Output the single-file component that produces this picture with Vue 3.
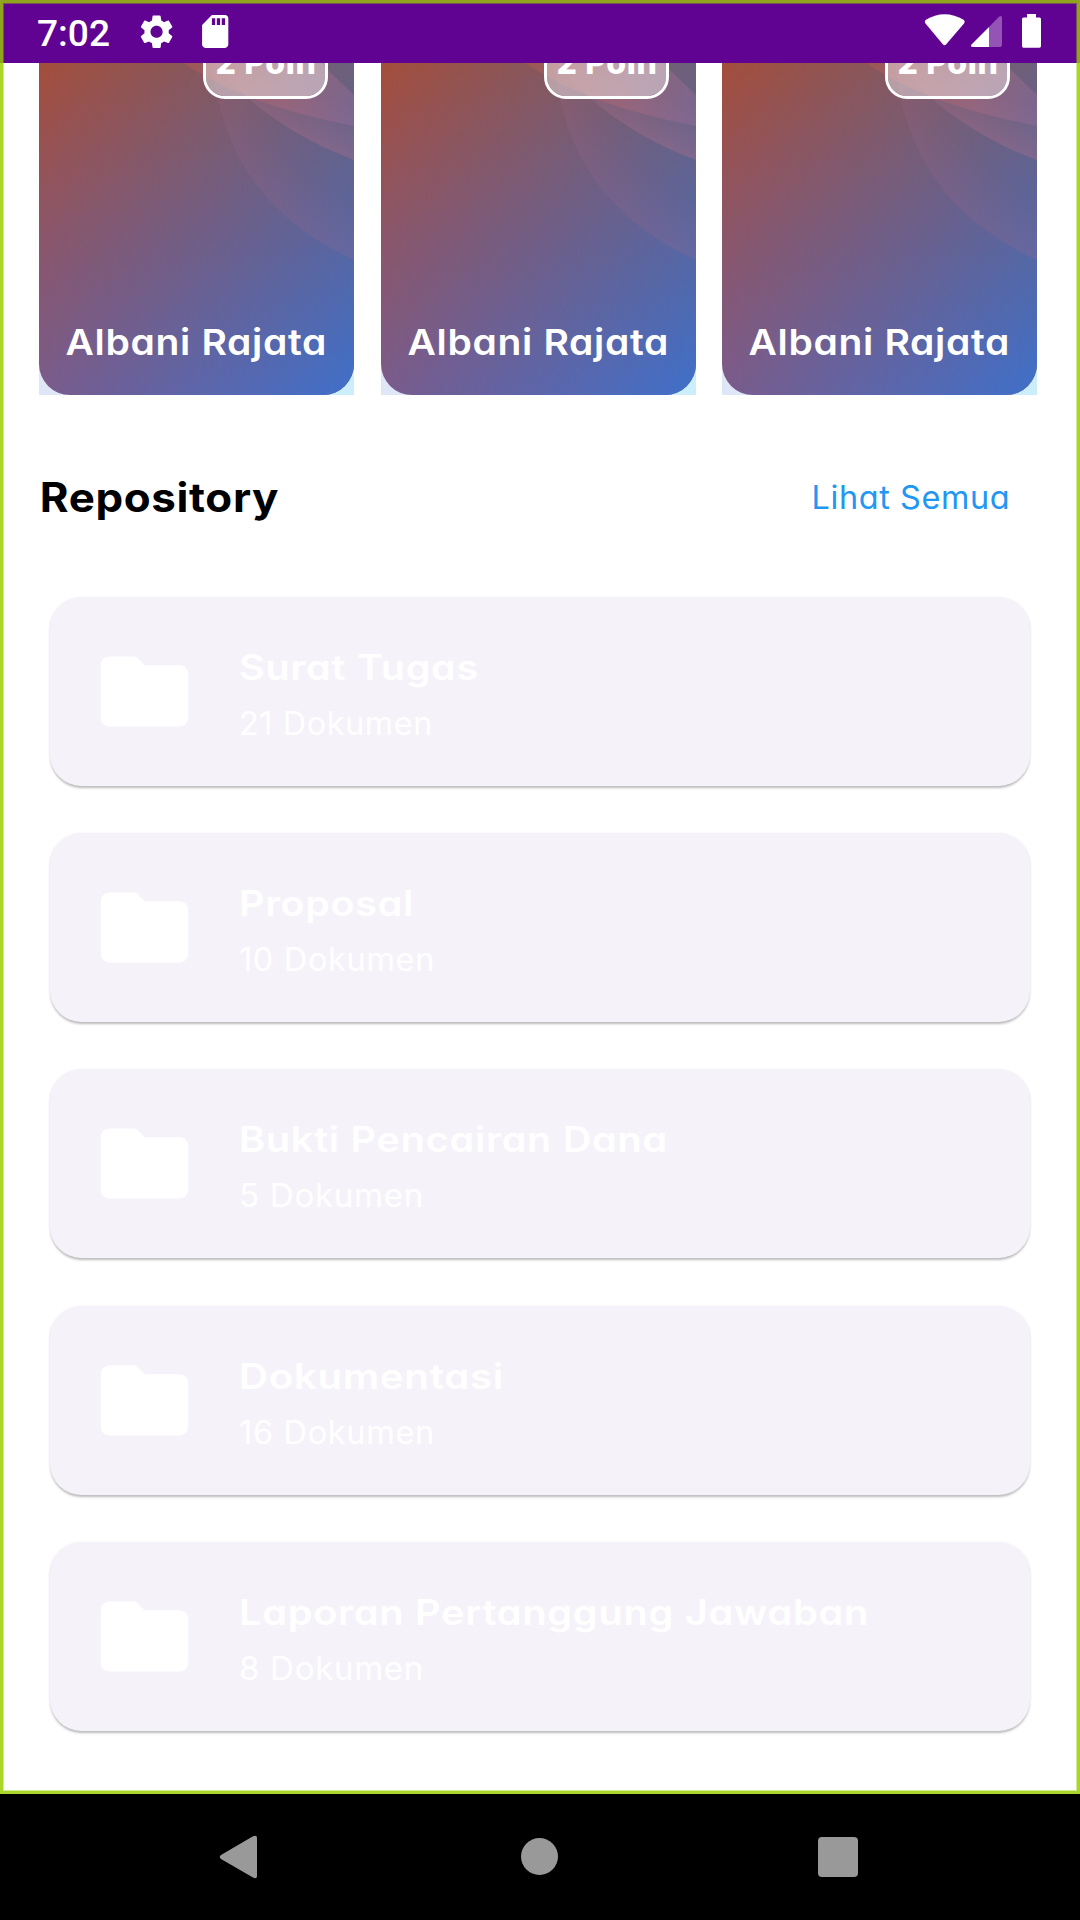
<script setup>
const people = [1, 2, 3]
const folders = [
  { title: 'Surat Tugas', tw: 240, sub: '21 Dokumen', sw: 194 },
  { title: 'Proposal', tw: 175, sub: '10 Dokumen', sw: 196 },
  { title: 'Bukti Pencairan Dana', tw: 429, sub: '5 Dokumen', sw: 185 },
  { title: 'Dokumentasi', tw: 265, sub: '16 Dokumen', sw: 196 },
  { title: 'Laporan Pertanggung Jawaban', tw: 630, sub: '8 Dokumen', sw: 185 },
]
</script>

<template>
  <div class="screen">
    <header class="status">
      <svg width="300" height="63" viewBox="0 0 300 63">
        <text x="37" y="45.700" textLength="73" lengthAdjust="spacingAndGlyphs" class="clock">7:02</text>
        <g transform="translate(136.300 11.500) scale(1.690)">
          <path fill="#fff" d="M19.14 12.94c.04-.3.06-.61.06-.94 0-.32-.02-.64-.07-.94l2.03-1.58c.18-.14.23-.41.12-.61l-1.92-3.32c-.12-.22-.37-.29-.59-.22l-2.39.96c-.5-.38-1.03-.7-1.62-.94l-.36-2.54c-.04-.24-.24-.41-.48-.41h-3.84c-.24 0-.43.17-.47.41l-.36 2.54c-.59.24-1.13.57-1.62.94l-2.39-.96c-.22-.08-.47 0-.59.22L2.74 8.87c-.12.21-.08.47.12.61l2.03 1.58c-.05.3-.09.63-.09.94s.02.64.07.94l-2.03 1.58c-.18.14-.23.41-.12.61l1.92 3.32c.12.22.37.29.59.22l2.39-.96c.5.38 1.03.7 1.62.94l.36 2.54c.05.24.24.41.48.41h3.84c.24 0 .44-.17.47-.41l.36-2.54c.59-.24 1.13-.56 1.62-.94l2.39.96c.22.08.47 0 .59-.22l1.92-3.32c.12-.22.07-.47-.12-.61l-2.01-1.58zM12 15.6c-1.98 0-3.6-1.62-3.6-3.6s1.62-3.6 3.6-3.6 3.6 1.62 3.6 3.6-1.62 3.6-3.6 3.6z" />
        </g>
        <g transform="translate(195.500 11.800) scale(1.640)">
          <path fill="#fff" d="M18 2h-8L4.020 8 4 20c0 1.100.9 2 2 2h12c1.100 0 2-.9 2-2V4c0-1.100-.9-2-2-2zm-6 6h-2V4h2v4zm3 0h-2V4h2v4zm3 0h-2V4h2v4z" />
        </g>
      </svg>
      <svg width="160" height="63" viewBox="920 0 160 63">
        <path fill="#fff" d="M925.500 20Q944.500 8.500 964 20Q965.500 21.500 964 23.500L946 44.500Q944.500 46 943 44.500L925.500 23.500Q924 21.500 925.500 20Z" />
        <path fill="#fff" fill-opacity=".32" d="M989 27L999 16.800Q1002 14.800 1002 18V45Q1002 47 1000 47H989Z" />
        <path fill="#fff" d="M989 27V47H973Q970 47 971.500 44.500Z" />
        <path fill="#fff" d="M1027 14H1036V17.500H1039.500Q1041 17.500 1041 19V46Q1041 47.700 1039.500 47.700H1023.500Q1022 47.700 1022 46V19Q1022 17.500 1023.500 17.500H1027Z" />
      </svg>
    </header>

    <main class="content">
      <section class="people">
        <article v-for="p in people" :key="p" class="person">
          <div class="cover">
            <svg class="rings" width="315" height="332" viewBox="0 0 315 332">
              <defs>
                <linearGradient :id="'a' + p" gradientUnits="userSpaceOnUse" x1="150" y1="0" x2="315" y2="50">
                  <stop offset="0" stop-color="#b85a50" stop-opacity=".42" />
                  <stop offset=".6" stop-color="#b06a7c" stop-opacity=".45" />
                  <stop offset="1" stop-color="#a070a0" stop-opacity=".35" />
                </linearGradient>
                <linearGradient :id="'b' + p" gradientUnits="userSpaceOnUse" x1="244" y1="68" x2="264" y2="22">
                  <stop offset="0" stop-color="#a86e8c" stop-opacity=".42" />
                  <stop offset="1" stop-color="#a86e8c" stop-opacity="0" />
                </linearGradient>
                <radialGradient :id="'c' + p" gradientUnits="userSpaceOnUse" cx="400" cy="-28" r="240">
                  <stop offset=".76" stop-color="#a0688c" stop-opacity="0" />
                  <stop offset="1" stop-color="#a0688c" stop-opacity=".22" />
                </radialGradient>
              </defs>
              <path :fill="`url(#c${p})`" d="M173 0C182 80 215 150 315 197V0Z" />
              <path :fill="`url(#b${p})`" d="M176 0C205 36 248 72 315 97V0Z" />
              <path :fill="`url(#a${p})`" d="M144 0C190 30 240 48 315 63V32Q298 16 282 0Z" />
            </svg>
            <div class="badge">
              <svg width="120" height="60" viewBox="0 0 120 60">
                <text x="9.500" y="33.200" textLength="101" lengthAdjust="spacingAndGlyphs" class="points">2 Poin</text>
              </svg>
            </div>
            <svg class="name" width="315" height="60" viewBox="0 0 315 60">
              <text x="26.500" y="39.700" textLength="261.500" lengthAdjust="spacingAndGlyphs" class="name-text">Albani Rajata</text>
            </svg>
          </div>
        </article>
      </section>

      <section class="heading">
        <svg width="260" height="60" viewBox="0 0 260 60">
          <text x="-.3" y="41.700" textLength="239.500" lengthAdjust="spacingAndGlyphs" class="h">Repository</text>
        </svg>
        <svg width="200" height="60" viewBox="0 0 200 60">
          <text x=".6" y="39.200" textLength="198.500" lengthAdjust="spacingAndGlyphs" class="link">Lihat Semua</text>
        </svg>
      </section>

      <section class="list">
        <article v-for="f in folders" :key="f.title" class="folder">
          <svg width="105" height="105" viewBox="0 0 24 24">
            <path fill="#fff" d="M10 4H4c-1.100 0-2 .9-2 2v12c0 1.100.9 2 2 2h16c1.100 0 2-.9 2-2V8c0-1.100-.9-2-2-2h-8l-2-2z" />
          </svg>
          <svg width="700" height="189" viewBox="0 0 700 189">
            <text x="-1" y="82.700" :textLength="f.tw" lengthAdjust="spacingAndGlyphs" class="title">{{ f.title }}</text>
            <text x="-1" y="137.500" :textLength="f.sw" lengthAdjust="spacingAndGlyphs" class="sub">{{ f.sub }}</text>
          </svg>
        </article>
      </section>
    </main>

    <nav class="nav">
      <svg width="1080" height="126" viewBox="0 1794 1080 126">
        <g fill="#999">
          <path d="M221 1855L253 1836.300Q257 1834.500 257 1838V1876Q257 1879.500 253 1877.500L221 1859Q218.500 1857 221 1855Z" />
          <circle cx="539.500" cy="1856.500" r="18.500" />
          <rect x="818" y="1837" width="40" height="40" rx="4" />
        </g>
      </svg>
    </nav>
    <div class="frame"></div>
    <div class="frame-shade"></div>
  </div>
</template>

<style>
body { margin: 0; background: #000; }
</style>

<style scoped>
.screen {
  position: relative;
  width: 1080px;
  height: 1920px;
  display: flex;
  flex-direction: column;
  background: #fff;
  overflow: hidden;
  font-family: Inter, "Noto Sans", sans-serif;
  font-feature-settings: "cv11" 1;
}
svg { display: block; flex: none; }
text { letter-spacing: .6px; }
.status {
  flex: none;
  height: 63px;
  display: flex;
  justify-content: space-between;
  background: #610392;
}
.clock { font: 500 37.500px Roboto, sans-serif; letter-spacing: 0; fill: #fff; }
.content { height: 1731px; flex: none; overflow: hidden; }
.people {
  display: flex;
  gap: 26.250px;
  padding-left: 39.370px;
}
.person {
  width: 315px;
  height: 332px;
  flex: none;
  background: linear-gradient(90deg, #dfe6f8 10%, #cceefa 90%);
}
.cover {
  position: relative;
  height: 331.500px;
  border-radius: 0 0 31px 31px;
  overflow: hidden;
  background: linear-gradient(180deg, #a44e3c 0%, #8d5668 50%, #7a5c8c 100%);
}
.cover::before {
  content: "";
  position: absolute;
  inset: 0;
  background: linear-gradient(180deg, #6c607c 0%, #5866a0 50%, #3f70ca 100%);
  -webkit-mask-image: linear-gradient(90deg, transparent, #000);
  mask-image: linear-gradient(90deg, transparent, #000);
}
.rings { position: relative; }
.badge {
  position: absolute;
  top: -25px;
  left: 163.500px;
  width: 119px;
  height: 55px;
  border: 3px solid #fff;
  border-radius: 22px;
  background: rgba(255, 255, 255, .42);
  background-clip: padding-box;
}
.points { font-size: 32px; font-weight: 800; fill: #fff; }
.name { position: absolute; left: 0; top: 252px; }
.name-text { font-size: 35.500px; font-weight: 600; fill: #fff; }
.heading {
  display: flex;
  justify-content: space-between;
  padding: 75px 69px 0 40px;
  height: 126.750px;
}
.h { font-size: 40.500px; font-weight: 700; fill: #000; }
.link { font-size: 32px; font-weight: 400; fill: #2196f3; }
.list {
  display: flex;
  flex-direction: column;
  gap: 47.250px;
  padding: 0 49.900px;
}
.folder {
  height: 189px;
  flex: none;
  display: flex;
  align-items: center;
  gap: 43px;
  padding-left: 42.300px;
  box-sizing: border-box;
  border-radius: 31.500px;
  background: #f6f2fa;
  box-shadow: 0 2.400px 2.600px -1px rgba(0, 0, 0, .15), 0 1.300px 2px rgba(0, 0, 0, .1), 0 1px 4px rgba(0, 0, 0, .05);
}
.title { font-size: 35px; font-weight: 600; fill: #fff; }
.sub { font-size: 32px; font-weight: 400; fill: #fff; }
.nav { flex: none; height: 126px; background: #000; }
.frame {
  position: absolute;
  left: 0;
  top: 0;
  width: 1080px;
  height: 1794px;
  box-shadow: inset 0 0 0 3px #a9d729, inset 0 0 0 4px #d4eb94;
}
.frame-shade {
  position: absolute;
  left: 0;
  top: 0;
  width: 1074px;
  height: 60px;
  border: 3px solid #8fa51e;
  border-bottom: 0;
  box-shadow: inset 1px 1px 0 #785458, inset -1px 0 0 #785458;
}
</style>
